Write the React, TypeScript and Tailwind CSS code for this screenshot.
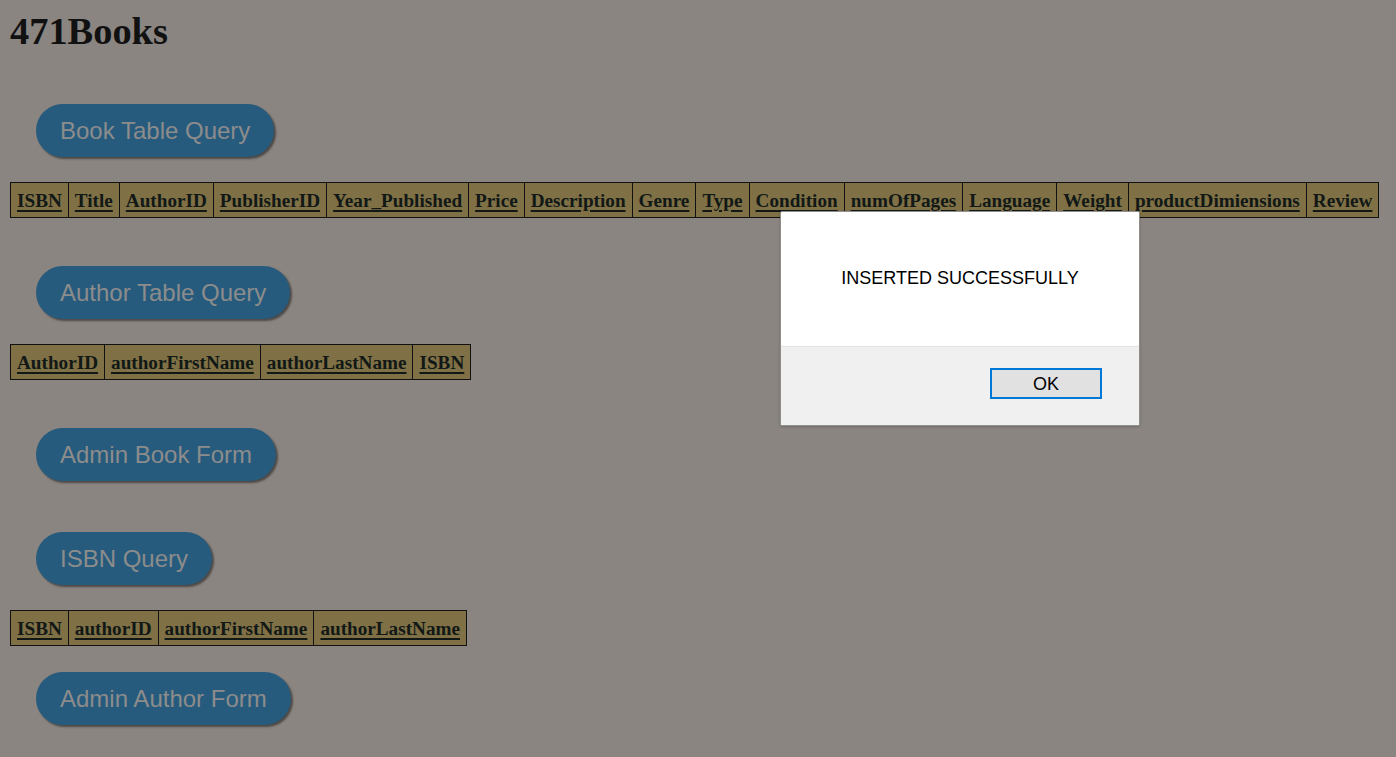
import React from "react"

const bookCols = [
  "ISBN",
  "Title",
  "AuthorID",
  "PublisherID",
  "Year_Published",
  "Price",
  "Description",
  "Genre",
  "Type",
  "Condition",
  "numOfPages",
  "Language",
  "Weight",
  "productDimiensions",
  "Review",
]
const authorCols = ["AuthorID", "authorFirstName", "authorLastName", "ISBN"]
const isbnCols = ["ISBN", "authorID", "authorFirstName", "authorLastName"]

function PillButton({ label, className = "" }: { label: string; className?: string }) {
  return (
    <button
      className={`ml-[26px] h-[53px] w-fit rounded-full bg-[#275b7d] px-[24px] font-['Liberation_Sans',Arial,sans-serif] text-[24px] leading-[27px] text-[#8c8c8c] shadow-[2px_2px_2px_rgba(0,0,0,0.45)] ${className}`}
    >
      {label}
    </button>
  )
}

function HeaderTable({ cols, className = "" }: { cols: string[]; className?: string }) {
  return (
    <table className={`w-fit border-collapse border border-[#111] bg-[#7f7045] ${className}`}>
      <thead>
        <tr>
          {cols.map((c) => (
            <th
              key={c}
              className="border border-[#111] px-[6px] pt-[7px] pb-[5px] text-[19.2px] leading-[22px] font-bold text-[#111816] underline decoration-[2px] underline-offset-[3px] whitespace-nowrap"
            >
              {c}
            </th>
          ))}
        </tr>
      </thead>
    </table>
  )
}

export default function App() {
  return (
    <div className="relative min-h-[757px] bg-[#8a8581] px-[10px] pt-[9px] pb-[30px] font-['Liberation_Serif','Times_New_Roman',serif]">
      <div className="flex flex-col">
        <h1 className="text-[38.4px] leading-[44px] font-bold text-[#111]">471Books</h1>

        <PillButton label="Book Table Query" className="mt-[51px]" />
        <HeaderTable cols={bookCols} className="mt-[25px]" />

        <PillButton label="Author Table Query" className="mt-[48px]" />
        <HeaderTable cols={authorCols} className="mt-[25px]" />

        <PillButton label="Admin Book Form" className="mt-[48px]" />

        <PillButton label="ISBN Query" className="mt-[51px]" />
        <HeaderTable cols={isbnCols} className="mt-[25px]" />

        <PillButton label="Admin Author Form" className="mt-[26px]" />
      </div>

      {/* alert dialog */}
      <div className="absolute top-[211px] left-[780px] flex h-[215px] w-[360px] flex-col overflow-hidden rounded-[2px] border border-[#8f8f8f] bg-white font-['Liberation_Sans',Arial,sans-serif] shadow-[0_1px_3px_rgba(0,0,0,0.2)]">
        <div className="flex h-[134px] items-center justify-center pb-[2px] text-[18px] text-black">
          INSERTED SUCCESSFULLY
        </div>
        <div className="flex flex-1 items-start justify-end border-t border-[#e3e3e3] bg-[#f0f0f0] pt-[21px] pr-[37px]">
          <button className="h-[31px] w-[112px] border-2 border-[#0078d7] bg-[#e1e1e1] text-[18px] leading-none text-black">
            OK
          </button>
        </div>
      </div>
    </div>
  )
}
